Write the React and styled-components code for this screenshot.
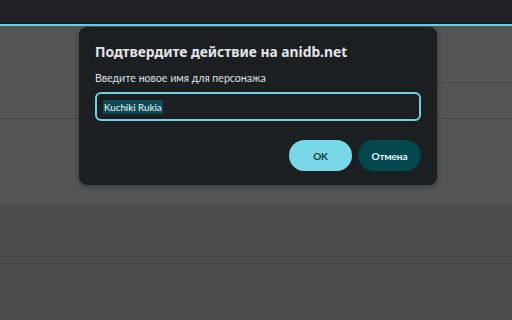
import React from 'react'
import styled, { createGlobalStyle } from 'styled-components'

const Global = createGlobalStyle`
  html, body { margin: 0; padding: 0; background: #4d4d4f; }
  body { font-family: Lato, "Noto Sans", sans-serif; }
`

const Page = styled.div`
  position: relative;
  width: 512px;
  height: 320px;
  overflow: hidden;
  background: #4d4d4f;
`

const TopBar = styled.div`
  height: 23px;
  background: #202124;
  border-bottom: 1px solid #151618;
  box-shadow: 0 2px 0 #6ccfe0;
  margin-bottom: 2px;
`

const Band = styled.div`
  height: ${p => p.h}px;
  background: ${p => p.bg || '#555658'};
  border-bottom: ${p => (p.line ? '1px solid #454547' : 'none')};
  display: flex;
  justify-content: flex-end;
`

const SideCell = styled.div`
  width: 75px;
  height: 36px;
  margin-top: 56px;
  border-top: 1px solid #474749;
`

const Dialog = styled.div`
  position: absolute;
  left: 79px;
  top: 27px;
  width: 358px;
  height: 158px;
  box-sizing: border-box;
  background: #1b1f22;
  border-radius: 8px;
  box-shadow: 0 2px 6px rgba(0, 0, 0, 0.35);
  padding: 15px 16px 0 16px;
  display: flex;
  flex-direction: column;
`

const Title = styled.div`
  color: #e3e5e8;
  font-family: "Noto Sans", sans-serif;
  font-size: 13.8px;
  font-weight: 700;
  line-height: 20px;
`

const Label = styled.div`
  color: #dfe1e4;
  font-size: 10.6px;
  line-height: 16px;
  margin-top: 8px;
`

const Input = styled.div`
  margin-top: 6px;
  height: 29px;
  box-sizing: border-box;
  border: 2px solid #75cfdf;
  border-radius: 6px;
  display: flex;
  align-items: center;
  padding: 0 6px;
`

const Selected = styled.span`
  background: #0c4b55;
  color: #f2f4f5;
  font-size: 9.8px;
  line-height: 14px;
  padding: 0 1px;
`

const Buttons = styled.div`
  display: flex;
  justify-content: flex-end;
  gap: 6px;
  margin-top: 19px;
`

const Button = styled.div`
  width: 63px;
  height: 31px;
  border-radius: 16px;
  display: flex;
  align-items: center;
  justify-content: center;
  font-size: 10px;
  font-weight: 700;
  letter-spacing: -0.1px;
  background: ${p => (p.primary ? '#78d8e8' : '#03474f')};
  color: ${p => (p.primary ? '#123c42' : '#e3f6f8')};
`

export default function App() {
  return (
    <Page>
      <Global />
      <TopBar />
      <Band h={92} line>
        <SideCell />
      </Band>
      <Band h={85} />
      <Band h={59} bg="#4c4c4e" line />
      <Band h={56} bg="#4c4c4e" />
      <Dialog>
        <Title>Подтвердите действие на anidb.net</Title>
        <Label>Введите новое имя для персонажа</Label>
        <Input>
          <Selected>Kuchiki Rukia</Selected>
        </Input>
        <Buttons>
          <Button primary>OK</Button>
          <Button>Отмена</Button>
        </Buttons>
      </Dialog>
    </Page>
  )
}
